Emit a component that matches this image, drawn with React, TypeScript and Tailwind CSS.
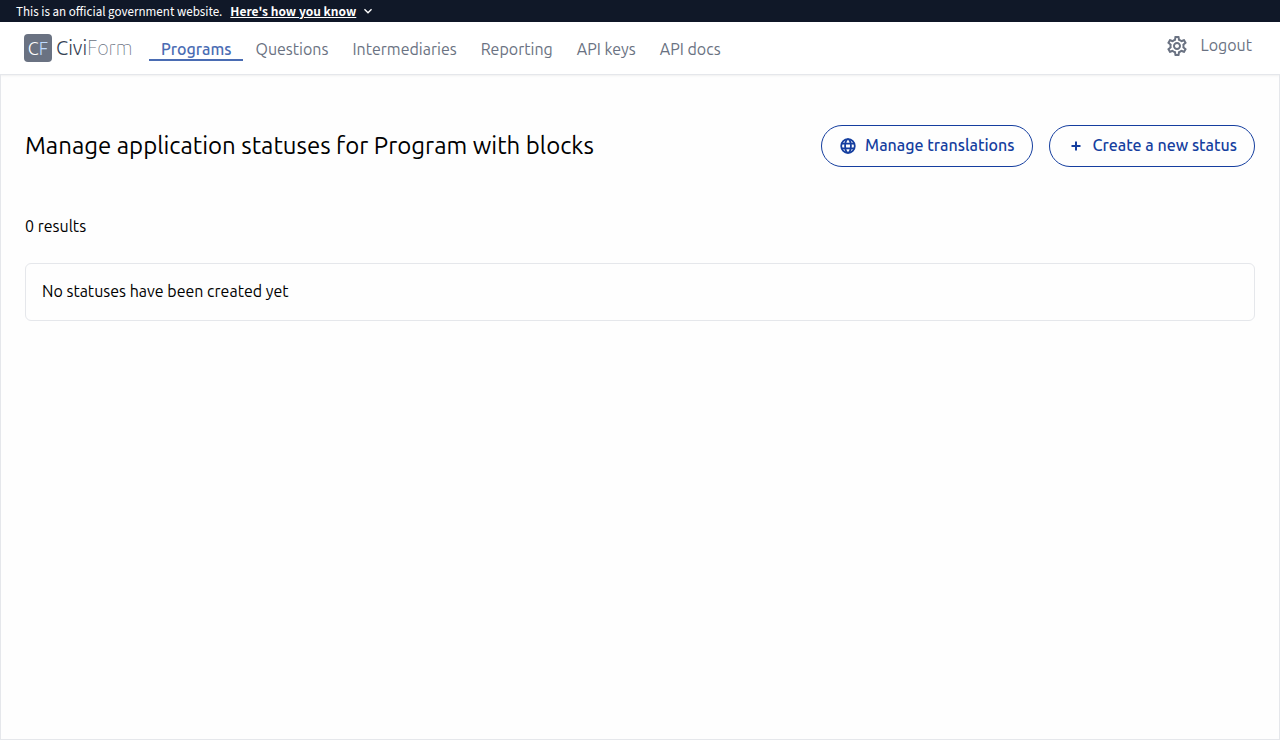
import { MdOutlineSettings, MdKeyboardArrowDown } from "react-icons/md";

const links = ["Programs", "Questions", "Intermediaries", "Reporting", "API keys", "API docs"];

function Banner() {
  return (
    <aside
      aria-label="Official government website"
      className="flex h-[22px] items-center bg-gray-900 px-4 text-white"
    >
      <p className="pt-0.5 font-['Source_Sans_3','Source_Sans_Pro','Noto_Sans_CJK_SC',sans-serif] text-[13px] leading-5">
        This is an official government website.
      </p>
      <button
        type="button"
        className="ml-2 flex items-center gap-1 font-['Noto_Sans_CJK_SC',sans-serif] text-xs font-bold"
      >
        <span className="underline">Here's how you know</span>
        <MdKeyboardArrowDown className="size-4" aria-hidden="true" />
      </button>
    </aside>
  );
}

function Header() {
  return (
    <header className="flex h-[52px] items-center bg-white px-6 text-gray-500 shadow-sm">
      <a href="#" className="flex items-center gap-1">
        <span className="flex size-7 items-center justify-center rounded bg-gray-500 text-lg font-light text-white">
          C<span className="text-blue-200">F</span>
        </span>
        <span className="w-[77px] text-xl font-light text-gray-700">
          Civi<span className="font-thin text-gray-500">Form</span>
        </span>
      </a>
      <nav className="ml-4 flex">
        {links.map((link, i) => (
          <a
            key={link}
            href="#"
            className={
              i === 0
                ? "border-b-2 border-[#4a6cb3] px-3 pt-1 leading-5 font-medium text-[#4a6cb3]"
                : "border-b-2 border-transparent px-3 pt-1 leading-5"
            }
          >
            {link}
          </a>
        ))}
      </nav>
      <div className="ml-auto flex items-center gap-3 pr-1 pb-1">
        <button type="button" aria-label="Settings">
          <MdOutlineSettings className="size-6" />
        </button>
        <a href="#" className="pb-0.5">Logout</a>
      </div>
    </header>
  );
}

const pill =
  "flex h-[42px] items-center gap-2 rounded-full border border-[#153e9f] px-[17px] font-medium text-[#153e9f]";

export default function App() {
  return (
    <div className="flex min-h-screen flex-col bg-[#fefefe] font-[Ubuntu,'Noto_Sans',sans-serif] text-base text-black">
      <Banner />
      <Header />
      <main className="flex-1 border border-gray-200 px-6 pt-[50px]">
        <div className="flex items-center justify-between">
          <h1 className="text-2xl">Manage application statuses for Program with blocks</h1>
          <div className="flex gap-4">
            <button type="button" className={pill}>
              <svg
                viewBox="0 0 18 18"
                className="size-[18px]"
                fill="none"
                stroke="currentColor"
                strokeWidth="1.8"
                aria-hidden="true"
              >
                <circle cx="9" cy="9" r="6.8" />
                <ellipse cx="9" cy="9" rx="2.9" ry="6.8" />
                <path d="M2.8 6.7h12.4M2.8 11.3h12.4" />
              </svg>
              <span className="pb-0.5">Manage translations</span>
            </button>
            <button type="button" className={pill}>
              <svg
                viewBox="0 0 18 18"
                className="size-[18px]"
                stroke="currentColor"
                strokeWidth="2"
                aria-hidden="true"
              >
                <path d="M4.5 9h9M9 4.5v9" />
              </svg>
              <span className="pb-0.5">Create a new status</span>
            </button>
          </div>
        </div>
        <p className="mt-12 leading-[22px]">0 results</p>
        <div className="mt-[26px] rounded-md border border-gray-200 px-4 pt-4 pb-[18px] leading-[22px]">
          No statuses have been created yet
        </div>
      </main>
    </div>
  );
}
